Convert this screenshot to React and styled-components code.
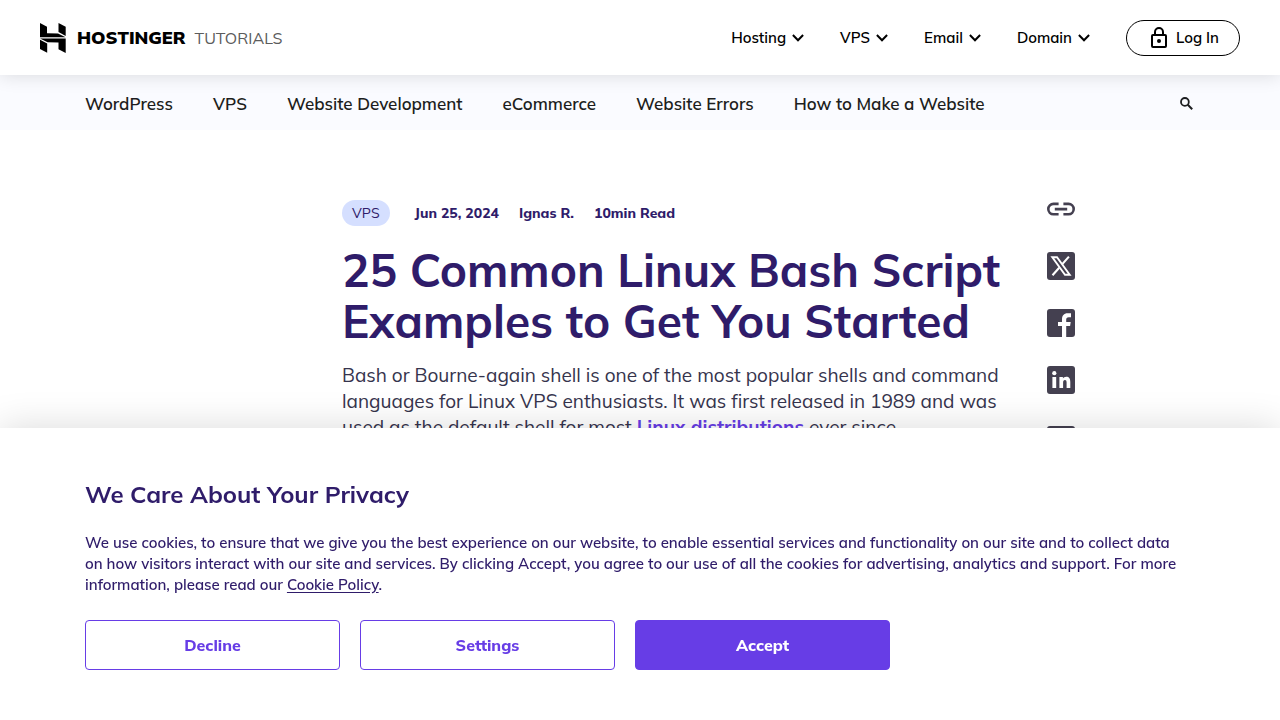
import React from "react";
import styled, { createGlobalStyle, css } from "styled-components";

const GlobalStyle = createGlobalStyle`
  *, *::before, *::after { box-sizing: border-box; }
  body {
    margin: 0;
    background: #fff;
    color: #2f1c6a;
    font-family: Mulish, Lato, "Open Sans", sans-serif;
    font-size: 16px;
    overflow: hidden;
  }
  a { color: inherit; text-decoration: none; }
  svg { display: block; flex: none; }
  h1, h2, p, ul { margin: 0; padding: 0; }
`;

const Header = styled.header`
  position: relative;
  z-index: 2;
  display: flex;
  align-items: center;
  justify-content: space-between;
  height: 75px;
  padding: 0 40px;
  background: #fff;
  box-shadow: 0 0 18px rgba(0, 0, 0, 0.14);
`;

const Brand = styled.a`
  display: flex;
  align-items: center;
  color: #000;
`;

const BrandName = styled.span`
  margin-left: 11px;
  font-size: 18px;
  font-weight: 900;
  line-height: 24px;
`;

const BrandSection = styled.span`
  margin-left: 9px;
  color: #5c5c5c;
  font-size: 16px;
  font-weight: 400;
  line-height: 24px;
`;

const MainNav = styled.nav`
  display: flex;
  align-items: center;
  gap: 36px;
`;

const MenuButton = styled.button`
  display: flex;
  align-items: center;
  gap: 6px;
  padding: 0;
  border: 0;
  background: none;
  color: #000;
  font-family: inherit;
  font-size: 15px;
  font-weight: 600;
  line-height: 24px;
`;

const LoginLink = styled.a`
  display: flex;
  align-items: center;
  justify-content: center;
  gap: 5px;
  width: 114px;
  height: 36px;
  border: 1px solid #000;
  border-radius: 18px;
  color: #000;
  font-size: 15px;
  font-weight: 600;
`;

const Container = styled.div`
  width: 100%;
  max-width: 1110px;
  margin: 0 auto;
`;

const TopicBar = styled.nav`
  background: #fafbff;
`;

const TopicRow = styled(Container)`
  display: flex;
  align-items: center;
  gap: 40px;
  height: 55px;
  padding-top: 2px;
`;

const TopicLink = styled.a`
  color: #1d1e20;
  font-size: 17px;
  font-weight: 600;
  line-height: 24px;
`;

const SearchButton = styled.button`
  margin-left: auto;
  padding: 0 2px;
  border: 0;
  background: none;
  color: #1d1e20;
`;

const Page = styled(Container)`
  display: grid;
  grid-template-columns: 257px minmax(0, 1fr) 148px;
  padding-top: 70px;
`;

const Article = styled.article`
  grid-column: 2;
  padding-right: 36px;
`;

const Meta = styled.div`
  display: flex;
  align-items: center;
  gap: 20px;
  font-size: 14px;
  font-weight: 800;
  line-height: 26px;
`;

const Tag = styled.a`
  margin-right: 5px;
  padding: 0 10px;
  border-radius: 13px;
  background: #d5dfff;
  font-weight: 400;
`;

const Title = styled.h1`
  margin-top: 19px;
  font-size: 46px;
  font-weight: 700;
  line-height: 51px;
`;

const Intro = styled.p`
  margin-top: 15px;
  color: #36344d;
  font-size: 19px;
  font-variant-ligatures: none;
  line-height: 26px;

  a { color: #673de6; font-weight: 700; }
`;

const ShareList = styled.ul`
  display: flex;
  flex-direction: column;
  gap: 29px;
  list-style: none;
  color: #444050;
`;

const ShareItem = styled.li`
  height: ${(p) => (p.$short ? "23px" : "28px")};
  a { display: block; }
`;

const Banner = styled.section`
  position: fixed;
  z-index: 5;
  right: 0;
  bottom: 0;
  left: 0;
  padding: 50px 0;
  background: #fff;
  box-shadow: 0 0 36px rgba(0, 0, 0, 0.15);
`;

const BannerTitle = styled.h2`
  font-size: 24px;
  font-weight: 700;
  line-height: 33px;
`;

const BannerText = styled.p`
  margin: 21px 0 25px;
  padding-right: 16px;
  font-size: 15px;
  font-weight: 600;
  line-height: 21px;

  a { text-decoration: underline; text-underline-offset: 2px; }
`;

const Actions = styled.div`
  display: flex;
  gap: 20px;
`;

const ActionButton = styled.button`
  width: 255px;
  height: 50px;
  border: 1px solid #673de6;
  border-radius: 4px;
  background: #fff;
  color: #673de6;
  font-family: inherit;
  font-size: 16px;
  font-weight: 800;
  ${(p) => p.$primary && css`
    background: #673de6;
    color: #fff;
  `}
`;

const LogoMark = () => (
  <svg width="26" height="30" viewBox="0 0 26 30" fill="currentColor" aria-hidden="true">
    <path d="M0 0L7 3.8V10.3L18 10.4L25.6 14.3H0Z" />
    <path d="M18.5 0L25.7 3.8V12.9L18.5 9.1Z" />
    <path d="M0 15.4H25.7V30L18.5 26.2V19.4L7.6 19.3L0 15.4Z" />
    <path d="M0 16.8L7.2 20.5V29.7L0 25.9Z" />
  </svg>
);

const Chevron = () => (
  <svg width="12" height="8" viewBox="0 0 12 8" fill="none" stroke="currentColor" strokeWidth="2" aria-hidden="true">
    <path d="M0.9 1L6 6.2L11.1 1" />
  </svg>
);

const LockIcon = () => (
  <svg width="24" height="22" viewBox="-4 0 24 22" aria-hidden="true">
    <path d="M4 8V5a4 4 0 0 1 8 0V8" fill="none" stroke="currentColor" strokeWidth="2" />
    <rect x="1" y="8" width="14" height="12" rx="1" fill="none" stroke="currentColor" strokeWidth="2" />
    <circle cx="8" cy="14" r="2" fill="currentColor" />
  </svg>
);

const SearchIcon = () => (
  <svg width="13" height="13" viewBox="0 0 13 13" fill="none" stroke="currentColor" aria-hidden="true">
    <circle cx="4.9" cy="4.9" r="3.9" strokeWidth="1.8" />
    <path d="M7.8 7.8L12.2 12.2" strokeWidth="2" />
  </svg>
);

const LinkIcon = () => (
  <svg width="28" height="18" viewBox="0 0 28 18" fill="none" stroke="currentColor" strokeWidth="2.6" aria-hidden="true">
    <path d="M11.6 3.9H6.5a5.2 5.2 0 0 0 0 10.4H11.6M16.4 3.9H21.5a5.2 5.2 0 0 1 0 10.4H16.4M7.8 9.1H20.2" />
  </svg>
);

const Tile = ({ children }) => (
  <svg width="28" height="28" viewBox="0 0 28 28" aria-hidden="true">
    <rect width="28" height="28" rx="3" fill="currentColor" />
    {children}
  </svg>
);

const XIcon = () => (
  <Tile>
    <path d="M5.3 5.3H10L22.7 22.7H18Z" fill="none" stroke="#fff" strokeWidth="1.9" />
    <path d="M21.9 4.6L15.1 12.4M12.2 15.7L5.5 23.3" stroke="#fff" strokeWidth="2.1" />
  </Tile>
);

const FacebookIcon = () => (
  <Tile>
    <path d="M15 28V17H11V13H15V10.4C15 6.6 17 4.3 20.5 4.3H24V8.3H21.8C19.8 8.3 19.2 9.2 19.2 10.8V13H23.7L23.1 17H19.2V28Z" fill="#fff" />
  </Tile>
);

const LinkedInIcon = () => (
  <Tile>
    <circle cx="7.3" cy="7.2" r="2.1" fill="#fff" />
    <path d="M5.4 11.1H9.2V22H5.4ZM12.4 11.1H15.9V12.6C16.6 11.5 17.7 10.8 19.2 10.8C22.2 10.8 23.3 12.8 23.3 15.9V22H19.6V16.6C19.6 14.9 19.1 14.1 17.9 14.1C16.7 14.1 16.1 15.1 16.1 16.7V22H12.4Z" fill="#fff" />
  </Tile>
);

const MailIcon = () => (
  <svg width="28" height="28" viewBox="0 0 28 28" aria-hidden="true">
    <rect y="3" width="28" height="22" rx="3" fill="currentColor" />
    <path d="M4 8L14 15L24 8" fill="none" stroke="#fff" strokeWidth="2.5" />
  </svg>
);

const menus = ["Hosting", "VPS", "Email", "Domain"];
const topics = ["WordPress", "VPS", "Website Development", "eCommerce", "Website Errors", "How to Make a Website"];
const shares = [
  { label: "Copy link", Icon: LinkIcon, short: true },
  { label: "Share on X", Icon: XIcon },
  { label: "Share on Facebook", Icon: FacebookIcon },
  { label: "Share on LinkedIn", Icon: LinkedInIcon },
  { label: "Share by email", Icon: MailIcon },
];

export default function App() {
  return (
    <>
      <GlobalStyle />
      <Header>
        <Brand href="#">
          <LogoMark />
          <BrandName>HOSTINGER</BrandName>
          <BrandSection>TUTORIALS</BrandSection>
        </Brand>
        <MainNav aria-label="Products">
          {menus.map((m) => (
            <MenuButton key={m} type="button">{m}<Chevron /></MenuButton>
          ))}
          <LoginLink href="#"><LockIcon />Log In</LoginLink>
        </MainNav>
      </Header>
      <TopicBar aria-label="Topics">
        <TopicRow>
          {topics.map((t) => <TopicLink key={t} href="#">{t}</TopicLink>)}
          <SearchButton type="button" aria-label="Search"><SearchIcon /></SearchButton>
        </TopicRow>
      </TopicBar>
      <Page as="main">
        <Article>
          <Meta>
            <Tag href="#">VPS</Tag>
            <span>Jun 25, 2024</span>
            <span>Ignas R.</span>
            <span>10min Read</span>
          </Meta>
          <Title>25 Common Linux Bash Script Examples to Get You Started</Title>
          <Intro>
            Bash or Bourne-again shell is one of the most popular shells and command
            languages for Linux VPS enthusiasts. It was first released in 1989 and was
            used as the default shell for most <a href="#">Linux distributions</a> ever since.
          </Intro>
        </Article>
        <ShareList>
          {shares.map(({ label, Icon, short }) => (
            <ShareItem key={label} $short={short}><a href="#" aria-label={label}><Icon /></a></ShareItem>
          ))}
        </ShareList>
      </Page>
      <Banner aria-label="Cookie consent">
        <Container>
          <BannerTitle>We Care About Your Privacy</BannerTitle>
          <BannerText>
            We use cookies, to ensure that we give you the best experience on our website, to enable essential
            services and functionality on our site and to collect data on how visitors interact with our site and
            services. By clicking Accept, you agree to our use of all the cookies for advertising, analytics and
            support. For more information, please read our <a href="#">Cookie Policy</a>.
          </BannerText>
          <Actions>
            <ActionButton type="button">Decline</ActionButton>
            <ActionButton type="button">Settings</ActionButton>
            <ActionButton type="button" $primary>Accept</ActionButton>
          </Actions>
        </Container>
      </Banner>
    </>
  );
}
